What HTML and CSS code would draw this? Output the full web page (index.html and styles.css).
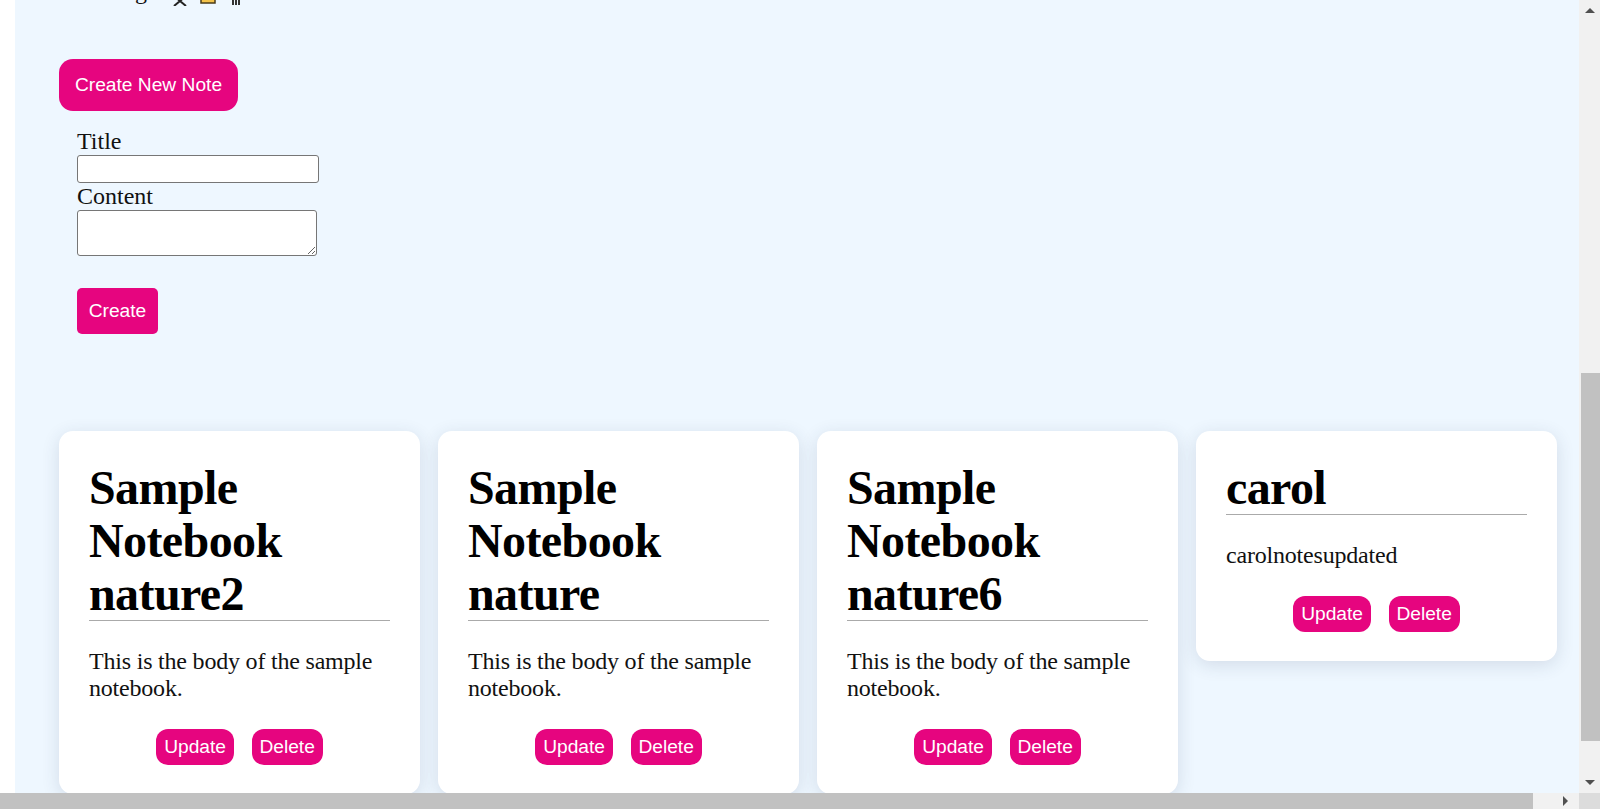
FILE: index.html
```html
<!DOCTYPE html>
<html lang="en">
<head>
<meta charset="utf-8">
<title>Notes</title>
<link rel="stylesheet" href="styles.css">
</head>
<body>
<div class="main">
  <div class="topline">
    <span class="title-text">Amazing</span>
    <svg class="ico ico-hand" width="16" height="24" viewBox="0 0 16 24"><path d="M2 14 L14 24 M14 14 L2 24" stroke="#222" stroke-width="2" fill="none"/></svg>
    <svg class="ico ico-pad" width="16" height="24" viewBox="0 0 16 24"><rect x="1" y="1" width="14" height="20" fill="#f3c24a" stroke="#4a3b1a" stroke-width="1.5"/></svg>
    <svg class="ico ico-bin" width="12" height="24" viewBox="0 0 12 24"><path d="M3 10 V23 M6 10 V23 M9 10 V23" stroke="#333" stroke-width="2" fill="none"/></svg>
  </div>

  <button class="btn btn-new">Create New Note</button>

  <form class="note-form">
    <label class="lbl" for="title">Title</label>
    <input class="field" id="title" type="text">
    <label class="lbl" for="content">Content</label>
    <textarea class="area" id="content"></textarea>
    <button type="button" class="btn btn-create">Create</button>
  </form>

  <div class="cards">
    <div class="card">
      <h1 class="card-title">Sample Notebook nature2</h1>
      <p class="card-body">This is the body of the sample notebook.</p>
      <div class="actions"><button class="btn btn-sm">Update</button><button class="btn btn-sm">Delete</button></div>
    </div>
    <div class="card">
      <h1 class="card-title">Sample Notebook nature</h1>
      <p class="card-body">This is the body of the sample notebook.</p>
      <div class="actions"><button class="btn btn-sm">Update</button><button class="btn btn-sm">Delete</button></div>
    </div>
    <div class="card">
      <h1 class="card-title">Sample Notebook nature6</h1>
      <p class="card-body">This is the body of the sample notebook.</p>
      <div class="actions"><button class="btn btn-sm">Update</button><button class="btn btn-sm">Delete</button></div>
    </div>
    <div class="card">
      <h1 class="card-title">carol</h1>
      <p class="card-body">carolnotesupdated</p>
      <div class="actions"><button class="btn btn-sm">Update</button><button class="btn btn-sm">Delete</button></div>
    </div>
  </div>
</div>

<div class="sb-v">
  <div class="sb-btn"><span class="tri tri-up"></span></div>
  <div class="sb-v-track"><div class="sb-v-thumb"></div></div>
  <div class="sb-btn"><span class="tri tri-down"></span></div>
</div>
<div class="sb-h">
  <div class="sb-h-thumb"></div>
  <div class="sb-h-btn"><span class="tri tri-right"></span></div>
</div>
<div class="sb-corner"></div>
</body>
</html>
```

FILE: styles.css
```css
html, body {
  margin: 0;
  padding: 0;
  background: #ffffff;
  overflow: hidden;
}

body {
  width: 1600px;
  height: 809px;
  font-family: "Liberation Serif", "Times New Roman", serif;
  color: #000;
}

.main {
  display: flow-root;
  margin-left: 15px;
  background: #eef7ff;
  height: 809px;
  padding-left: 44px;
  box-sizing: border-box;
}

.topline {
  margin-top: -22px;
  height: 27px;
  display: flex;
  align-items: baseline;
  font-size: 24px;
  line-height: 27px;
}

.title-text {
  color: #111;
}

.ico {
  position: relative;
  top: 6px;
  align-self: flex-start;
  margin-top: -2px;
}
.ico-hand { margin-left: 25px; }
.ico-pad { margin-left: 12px; }
.ico-bin { margin-left: 14px; }

.btn {
  font-family: "Liberation Sans", Arial, sans-serif;
  font-size: 19.2px;
  color: #fff;
  background: #e6057f;
  border: none;
  cursor: pointer;
  display: block;
  padding: 0;
}

.btn-new {
  margin-top: 54px;
  width: 179px;
  height: 52px;
  border-radius: 14px;
}

.note-form {
  margin: 17px 0 0 18px;
  width: 260px;
}

.lbl {
  display: block;
  font-size: 24px;
  line-height: 27px;
  color: #111;
}

.field {
  display: block;
  box-sizing: border-box;
  width: 242px;
  height: 28px;
  margin: 0;
  border: 1px solid #767676;
  border-radius: 3px;
  background: #fff;
  padding: 1px 2px;
}

.area {
  display: block;
  box-sizing: border-box;
  width: 240px;
  height: 46px;
  margin: 0;
  border: 1px solid #767676;
  border-radius: 3px;
  background: #fff;
  padding: 2px;
}

.btn-create {
  margin-top: 32px;
  width: 81px;
  height: 46px;
  border-radius: 5px;
}

.cards {
  margin-top: 97px;
  display: grid;
  grid-template-columns: repeat(4, 361px);
  column-gap: 18px;
  align-items: start;
}

.card {
  background: #fff;
  border-radius: 14px;
  padding: 30px 30px 29px;
  box-shadow: 0 4px 18px rgba(40, 60, 90, 0.14);
}

.card-title {
  margin: 0;
  font-size: 48px;
  line-height: 53px;
  font-weight: bold;
  letter-spacing: -0.6px;
  border-bottom: 1px solid #aaa;
}

.card-body {
  margin: 27px 0 0;
  font-size: 24px;
  line-height: 27px;
  letter-spacing: -0.2px;
  color: #111;
}

.actions {
  margin-top: 27px;
  display: flex;
  justify-content: center;
  gap: 18px;
}

.btn-sm {
  height: 36px;
  padding: 0 7.7px;
  border-radius: 12px;
}

/* fake window scrollbars */
.sb-v {
  position: fixed;
  top: 0;
  right: 0;
  width: 21px;
  height: 793px;
  background: #f1f1f1;
  display: flex;
  flex-direction: column;
}
.sb-btn {
  height: 21px;
  display: flex;
  align-items: center;
  justify-content: center;
}
.sb-v-track {
  flex: 1;
  position: relative;
}
.sb-v-thumb {
  position: absolute;
  left: 2px;
  right: 0;
  top: 352px;
  height: 368px;
  background: #c1c1c1;
}
.sb-h {
  position: fixed;
  left: 0;
  bottom: 0;
  width: 1579px;
  height: 16px;
  background: #f1f1f1;
  display: flex;
}
.sb-h-thumb {
  width: 1533px;
  height: 16px;
  background: #c1c1c1;
}
.sb-h-btn {
  margin-left: auto;
  width: 28px;
  display: flex;
  align-items: center;
  justify-content: center;
}
.sb-corner {
  position: fixed;
  right: 0;
  bottom: 0;
  width: 21px;
  height: 16px;
  background: #dcdcdc;
}
.tri {
  width: 0;
  height: 0;
  border-style: solid;
}
.tri-up {
  border-width: 0 5px 5px 5px;
  border-color: transparent transparent #505050 transparent;
}
.tri-down {
  border-width: 5px 5px 0 5px;
  border-color: #505050 transparent transparent transparent;
}
.tri-right {
  border-width: 5px 0 5px 5px;
  border-color: transparent transparent transparent #505050;
}
```
